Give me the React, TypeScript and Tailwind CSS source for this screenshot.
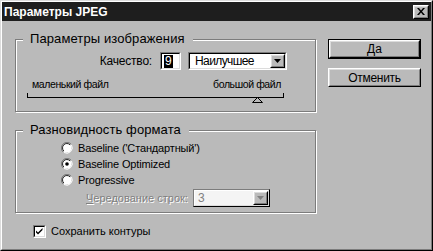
import React from "react";

const F = { fontFamily: '"Liberation Sans", Arial, sans-serif' };

function Raised({ children, className = "" }: { children?: React.ReactNode; className?: string }) {
  return (
    <div className={"border border-t-white border-l-white border-r-black border-b-black " + className}>
      <div className="w-full h-full border border-t-[#dcdcdc] border-l-[#dcdcdc] border-r-[#7c7c7c] border-b-[#7c7c7c] flex items-center justify-center">
        {children}
      </div>
    </div>
  );
}

function Sunken({ children, className = "", inner = "bg-white" }: { children?: React.ReactNode; className?: string; inner?: string }) {
  return (
    <div className={"border border-t-[#7c7c7c] border-l-[#7c7c7c] border-r-white border-b-white " + className}>
      <div className={"w-full h-full border border-t-black border-l-black border-r-[#dcdcdc] border-b-[#dcdcdc] flex items-center " + inner}>
        {children}
      </div>
    </div>
  );
}

function Arrow({ color = "#000" }: { color?: string }) {
  return (
    <svg width="7" height="4" viewBox="0 0 7 4">
      <path d="M0 0h7L3.5 4z" fill={color} />
    </svg>
  );
}

function Group({ title, className = "", children }: { title: string; className?: string; children?: React.ReactNode }) {
  return (
    <div className={"relative border border-[#7c7c7c] shadow-[1px_1px_0_#fff,inset_1px_1px_0_#fff] " + className}>
      <div className="absolute left-[7px] top-[-9px] bg-[#bababa] pl-[7px] pr-[8px] text-[13px] leading-[16px] tracking-[0.1px] text-black">{title}</div>
      {children}
    </div>
  );
}

function Radio({ checked, label }: { checked?: boolean; label: string }) {
  return (
    <div className="flex items-center h-[16px]">
      <svg width="12" height="12" viewBox="0 0 12 12" className="shrink-0">
        <path d="M2 10A5.5 5.5 0 0 1 10 2" stroke="#7c7c7c" strokeWidth="1" fill="none" />
        <circle cx="6" cy="6" r="4.5" fill="#fff" />
        <path d="M10.5 3A5.5 5.5 0 0 1 3 10.5" stroke="#fff" strokeWidth="1" fill="none" />
        <path d="M2.8 9A4.3 4.3 0 0 1 9 2.8" stroke="#222" strokeWidth="1" fill="none" />
        {checked && <circle cx="6" cy="6" r="1.8" fill="#000" />}
      </svg>
      <span className="ml-[5px] text-[11px] leading-[14px] tracking-[-0.15px] text-black">{label}</span>
    </div>
  );
}

export default function App() {
  return (
    <div style={F} className="w-[433px] h-[251px] bg-[#bababa] border border-t-[#dcdcdc] border-l-[#dcdcdc] border-r-black border-b-black">
      <div className="w-full h-full border border-t-white border-l-white border-r-[#7c7c7c] border-b-[#7c7c7c] flex flex-col">
        <div className="h-[19px] bg-[#1e1e1e] flex items-center justify-between pl-[2px] pr-[2px]">
          <span className="text-white font-bold text-[12px] leading-[14px]">Параметры JPEG</span>
          <Raised className="w-[16px] h-[14px] bg-[#bababa]">
            <svg width="8" height="7" viewBox="0 0 8 7">
              <path d="M0 0h2l2 2.5L6 0h2L5 3.5L8 7H6L4 4.5L2 7H0l3-3.5z" fill="#000" />
            </svg>
          </Raised>
        </div>
        <div className="flex pl-[13px] pt-[18px]">
          <div className="w-[301px] flex flex-col">
            <Group title="Параметры изображения" className="h-[73px]">
              <div className="flex justify-end items-center pt-[12px] pr-[28px]">
                <span className="text-[12px] leading-[14px] tracking-[-0.2px] mr-[8px]">Качество:</span>
                <Sunken className="w-[21px] h-[18px]">
                  <span className="ml-[2px] bg-black text-white text-[12px] leading-[13px] px-[1px]">9</span>
                </Sunken>
                <Sunken className="w-[99px] h-[18px] ml-[7px]">
                  <span className="ml-[5px] flex-1 text-[12px] leading-[14px] tracking-[-0.6px]">Наилучшее</span>
                  <Raised className="w-[15px] h-[14px] bg-[#bababa]">
                    <Arrow />
                  </Raised>
                </Sunken>
              </div>
              <div className="flex justify-between pl-[16px] pr-[34px] mt-[7px] text-[10.5px] leading-[14px] tracking-[-0.4px]">
                <span>маленький файл</span>
                <span>большой файл</span>
              </div>
              <div className="relative ml-[11px] w-[257px] h-[5px] mt-[2px] border-l border-r border-b border-black">
                <svg className="absolute left-[224px] top-[4px]" width="11" height="6" viewBox="0 0 11 6">
                  <path d="M5.5 0.5L0.5 5.5H10.5Z" fill="#bababa" stroke="#000" strokeWidth="1" />
                </svg>
              </div>
            </Group>
            <Group title="Разновидность формата" className="h-[83px] mt-[18px]">
              <div className="flex flex-col pl-[45px] pt-[9px]">
                <Radio label="Baseline ('Стандартный')" />
                <Radio checked label="Baseline Optimized" />
                <Radio label="Progressive" />
              </div>
              <div className="flex items-center pl-[70px] mt-[1px]">
                <span className="w-[103px] text-[11px] leading-[14px] text-[#808080] [text-shadow:1px_1px_0_#fff]">
                  <span className="underline">Ч</span>ередование строк:
                </span>
                <div className="ml-[4px] w-[77px] h-[18px] border border-t-[#7c7c7c] border-l-[#7c7c7c] border-r-black border-b-black">
                  <div className="w-full h-full flex items-center bg-[#f4f4f4] border border-t-white border-l-white border-r-[#dcdcdc] border-b-[#dcdcdc]">
                    <span className="ml-[3px] flex-1 text-[12px] leading-[14px] text-[#808080]">3</span>
                    <Raised className="w-[15px] h-[14px] bg-[#bababa]">
                      <Arrow color="#808080" />
                    </Raised>
                  </div>
                </div>
              </div>
            </Group>
            <div className="flex items-center mt-[11px] pl-[18px]">
              <Sunken className="w-[13px] h-[13px]">
                <svg width="9" height="9" viewBox="0 0 9 9">
                  <path d="M1 3.5l2 2l4.5-4.5v2l-4.5 4.5l-2-2z" fill="#000" />
                </svg>
              </Sunken>
              <span className="ml-[5px] text-[11px] leading-[14px]">Сохранить контуры</span>
            </div>
          </div>
          <div className="ml-[12px] flex flex-col">
            <div className="w-[93px] h-[20px] border border-black">
              <Raised className="w-full h-full bg-[#bababa]">
                <span className="text-[12px] leading-[14px]">Да</span>
              </Raised>
            </div>
            <Raised className="w-[93px] h-[19px] mt-[9px] bg-[#bababa]">
              <span className="text-[12px] leading-[14px] tracking-[-0.3px]">Отменить</span>
            </Raised>
          </div>
        </div>
      </div>
    </div>
  );
}
